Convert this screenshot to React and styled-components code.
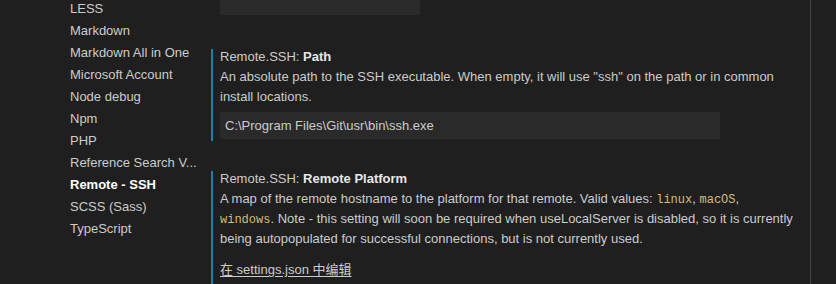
import React from 'react';
import styled, { createGlobalStyle } from 'styled-components';

const GlobalStyle = createGlobalStyle`
  html, body {
    margin: 0;
    padding: 0;
    background: #1f1f1f;
    overflow: hidden;
  }
  body {
    font-family: "Liberation Sans", "Noto Sans CJK SC", sans-serif;
    font-size: 13px;
    color: #cccccc;
  }
`;

const Page = styled.div`
  display: flex;
  width: 836px;
  height: 284px;
  background: #1f1f1f;
  overflow: hidden;
`;

const Sidebar = styled.div`
  width: 211px;
  flex-shrink: 0;
  display: flex;
  flex-direction: column;
  margin-top: -2px;
`;

const TreeItem = styled.div`
  flex-shrink: 0;
  height: 22px;
  line-height: 22px;
  padding-left: 70px;
  white-space: nowrap;
  color: ${(p) => (p.$active ? '#ffffff' : '#cccccc')};
  font-weight: ${(p) => (p.$active ? 700 : 400)};
`;

const Main = styled.div`
  width: 599px;
  flex-shrink: 0;
  display: flex;
  flex-direction: column;
  border-right: 1px solid #444444;
`;

const PrevInput = styled.div`
  flex-shrink: 0;
  margin-left: 9px;
  width: 200px;
  height: 15px;
  background: #2a2a2a;
  margin-bottom: 34px;
`;

const Setting = styled.div`
  flex-shrink: 0;
  border-left: 2px solid #1b7fa9;
  padding-left: 7px;
  padding-bottom: ${(p) => p.$pb || 0}px;
  margin-bottom: ${(p) => p.$mb || 0}px;
`;

const Title = styled.div`
  line-height: 16px;
  height: 16px;
  margin-bottom: 2px;
  color: #cccccc;
  white-space: nowrap;
`;

const Category = styled.span`
  color: #cccccc;
`;

const Key = styled.span`
  font-weight: 700;
  color: #e8e8e8;
`;

const Description = styled.div`
  line-height: 20px;
  color: #cccccc;
  width: 588px;
`;

const Code = styled.code`
  font-family: "Liberation Mono", "DejaVu Sans Mono", monospace;
  font-size: 12px;
  line-height: 1;
  color: #d7ba7d;
`;

const TextInput = styled.div`
  margin-top: 5px;
  width: 500px;
  height: 27px;
  line-height: 27px;
  box-sizing: border-box;
  padding-left: 5px;
  background: #2a2a2a;
  color: #cccccc;
  white-space: nowrap;
`;

const EditLink = styled.a`
  display: inline-block;
  margin-top: 11px;
  line-height: 20px;
  color: #cccccc;
  text-decoration: underline;
  text-underline-offset: 2px;
`;

const Gutter = styled.div`
  flex: 1;
`;

const categories = [
  'LESS',
  'Markdown',
  'Markdown All in One',
  'Microsoft Account',
  'Node debug',
  'Npm',
  'PHP',
  'Reference Search V...',
  'Remote - SSH',
  'SCSS (Sass)',
  'TypeScript',
];

export default function App() {
  return (
    <>
      <GlobalStyle />
      <Page>
        <Sidebar>
          {categories.map((c) => (
            <TreeItem key={c} $active={c === 'Remote - SSH'}>
              {c}
            </TreeItem>
          ))}
        </Sidebar>
        <Main>
          <PrevInput />
          <Setting $pb={2} $mb={30}>
            <Title>
              <Category>Remote.SSH: </Category>
              <Key>Path</Key>
            </Title>
            <Description>
              An absolute path to the SSH executable. When empty, it will use "ssh" on the path or in common
              install locations.
            </Description>
            <TextInput>C:\Program Files\Git\usr\bin\ssh.exe</TextInput>
          </Setting>
          <Setting $pb={4}>
            <Title>
              <Category>Remote.SSH: </Category>
              <Key>Remote Platform</Key>
            </Title>
            <Description>
              A map of the remote hostname to the platform for that remote. Valid values: <Code>linux</Code>,{' '}
              <Code>macOS</Code>,
              <br />
              <Code>windows</Code>. Note - this setting will soon be required when useLocalServer is disabled,
              so it is currently being autopopulated for successful connections, but is not currently used.
            </Description>
            <EditLink href="#">在 settings.json 中编辑</EditLink>
          </Setting>
        </Main>
        <Gutter />
      </Page>
    </>
  );
}
